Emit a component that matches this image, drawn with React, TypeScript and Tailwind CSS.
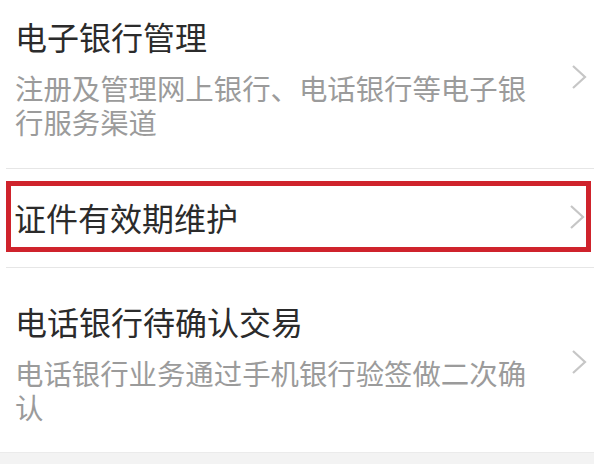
import { ReactNode } from "react"

function Chevron() {
  return (
    <svg width="16" height="26" viewBox="0 0 16 26" className="shrink-0">
      <polyline points="2,2 14,13 2,24" fill="none" stroke="#c6c6c6" strokeWidth="2.2" strokeLinejoin="miter" />
    </svg>
  )
}

function Row({ title, desc, className }: { title: string; desc?: string; className?: string }) {
  return (
    <div className={`flex items-center gap-8 pl-[15px] pr-[7px] ${className ?? ""}`}>
      <div className="flex-1">
        <div className="text-[32px] leading-[44px] text-[#2b2b2b]">{title}</div>
        {desc && <div className="mt-[13px] text-[28.4px] leading-[34px] text-[#9b9b9b]">{desc}</div>}
      </div>
      <Chevron />
    </div>
  )
}

function Highlight({ children }: { children: ReactNode }) {
  // red annotation frame round the selected row
  return <div className="ml-[6px] mr-[3px] border-[5px] border-[#cf232c]">{children}</div>
}

export default function App() {
  return (
    <div
      className="h-[464px] w-[594px] overflow-hidden bg-white"
      style={{ fontFamily: '"Noto Sans CJK SC", "Noto Sans", sans-serif' }}
    >
      <Row
        title="电子银行管理"
        desc="注册及管理网上银行、电话银行等电子银行服务渠道"
        className="-mt-[20px] pt-[34px] pb-[29px]"
      />
      <div className="ml-[6px] h-px bg-[#e6e6e6]" />

      <div className="pt-[12px] pb-[15px]">
        <Highlight>
          <div className="flex h-[61px] items-center justify-between pl-[3px] pr-[1px]">
            <div className="text-[32px] leading-[44px] text-[#2b2b2b]">证件有效期维护</div>
            <Chevron />
          </div>
        </Highlight>
      </div>
      <div className="ml-[6px] h-px bg-[#e6e6e6]" />

      <Row
        title="电话银行待确认交易"
        desc="电话银行业务通过手机银行验签做二次确认"
        className="pt-[31px] pb-[28px]"
      />
      <div className="h-[20px] border-t border-[#ebebeb] bg-[#f3f3f3]" />
    </div>
  )
}
